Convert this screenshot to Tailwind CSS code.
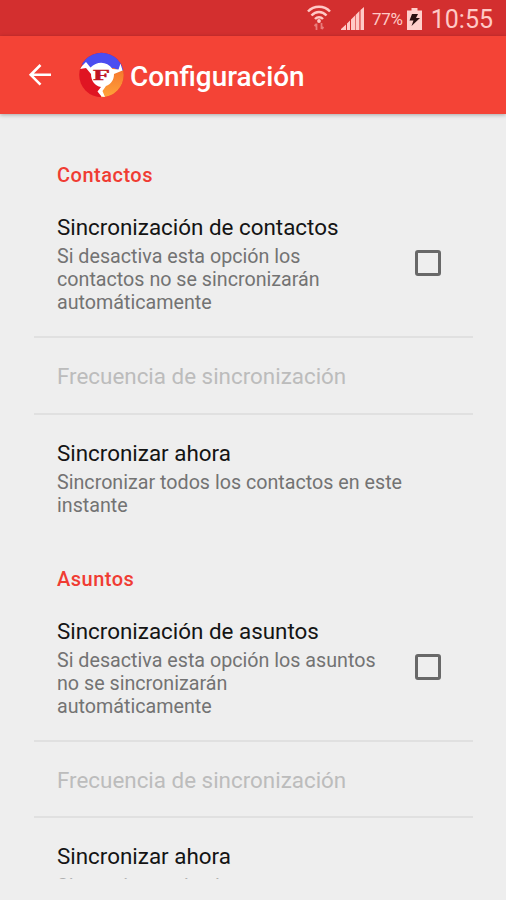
<!DOCTYPE html>
<html lang="es">
<head>
  <meta charset="UTF-8" />
  <meta name="viewport" content="width=device-width, initial-scale=1.0" />
  <title>Configuración</title>

  <!-- Tailwind (CDN) -->
  <script src="https://cdn.jsdelivr.net/npm/@tailwindcss/browser@4"></script>
</head>

<body class="bg-[#eeeeee] h-[900px] overflow-hidden flex flex-col font-[Roboto,sans-serif] text-[#141414]">
  <!-- Barra de estado -->
  <div class="h-9 shrink-0 bg-[#d32f2f] text-[#ffc9c6] flex items-center justify-end pr-[13px]">
    <svg class="w-6 h-[26px] mr-[10px]" viewBox="0 0 24 26" fill="none" stroke="currentColor" stroke-width="2.5">
      <path d="M1 6.500C7 0.300 17 0.300 23 6.500M4.500 10.500c4.300-4.600 10.700-4.600 15 0M8 14c2.400-2.500 5.600-2.500 8 0" />
      <circle cx="12" cy="16" r="1.900" fill="currentColor" stroke="none" />
      <path d="M9.500 25v-6.500M7.500 21l2-2M14.500 18v6M16.500 22l-2 2" stroke-width="1.800" opacity=".5" />
    </svg>
    <svg class="w-6 h-6 mr-[7px]" viewBox="0 0 24 24" fill="currentColor">
      <path d="M0 24v-1l5-4.500V24zM6 24v-6.500l3-3V24zM10 24V13.500L14 9.500V24zM14.600 24V9l3.800-4V24zM19.500 24V4L23 1v23z" />
    </svg>
    <span class="text-[17px] leading-9 mr-[4px] tracking-[-0.3px] pt-[2px]">77%</span>
    <svg class="w-[15px] h-[22px] mr-[9px] mt-px" viewBox="0 0 15 22">
      <path d="M4.500 0h6v2.500H15V22H0V2.500h4.500z" fill="#ffd0cc" />
      <path d="M5 6h6L9 10h4L4.500 18l2-5.500H2.500z" fill="#2a1010" />
    </svg>
    <span class="text-[25px] leading-9 pt-[4px]">10:55</span>
  </div>

  <!-- Cabecera -->
  <header class="relative h-[78px] shrink-0 bg-[#f44336] text-white flex items-center shadow-[0_1px_4px_rgba(0,0,0,0.3)]">
    <svg class="w-6 h-6 ml-7 mr-[27px]" viewBox="0 0 24 24" fill="none" stroke="currentColor" stroke-width="2.600">
      <path d="M23 11.800H2.800M12.500 2l-9.800 9.800 9.800 9.800" />
    </svg>
    <svg class="w-[45px] h-[46px] mr-[6px]" viewBox="0 0 45 46">
      <defs>
        <clipPath id="disc"><circle cx="22.500" cy="23" r="22.300" /></clipPath>
        <linearGradient id="amber" x1="0" y1="0" x2="0" y2="1">
          <stop offset="0" stop-color="#f4702c" />
          <stop offset="1" stop-color="#ffa53a" />
        </linearGradient>
      </defs>
      <g clip-path="url(#disc)">
        <path d="M0 0h45v46H0z" fill="#e01522" />
        <path d="M22 46V28L34 14h11v32z" fill="url(#amber)" />
        <path d="M0 13V0h45v18l-4 1-6-3H12l-4-4z" fill="#4b4df0" />
        <path d="M1 17l2-3 4-4 4.500 5.500C18 9 28 9 33.500 17l6 .5 2-6 2 7-8.500 3.500c0 6-3 10-8 12l-3.500 5 2.500 6-3.500-.5-4-5 3.500-4.500c-6-1-10-6-10-13L7 16z" fill="#fff" />
      </g>
      <text x="22.500" y="28.300" text-anchor="middle" font-family="Liberation Serif, serif" font-weight="700" font-size="15" textLength="17" lengthAdjust="spacingAndGlyphs" fill="#c01520" stroke="#c01520" stroke-width=".4">F</text>
    </svg>
    <h1 class="text-[27.900px] font-medium pt-[3px]">Configuración</h1>
  </header>

  <!-- Lista de preferencias -->
  <main class="h-[765px] shrink-0 overflow-hidden pl-[34px] pr-[33px] pt-[42px]">
    <section class="h-[404px]">
      <h2 class="px-[23px] text-[20px] leading-[38px] font-medium tracking-[0.5px] text-[#f03c33]">Contactos</h2>
      <div class="h-[144px] pl-[23px] pr-8 pt-[17px] flex border-b-2 border-[#e0e0e0]">
        <div class="w-[330px]">
          <h3 class="text-[22.400px] leading-[32px] pb-[2px] whitespace-nowrap">Sincronización de contactos</h3>
          <p class="text-[19.700px] leading-[23px] text-[#737373]">Si desactiva esta opción los<br>contactos no se sincronizarán<br>automáticamente</p>
        </div>
        <span class="ml-auto mt-[39px] size-[26px] shrink-0 rounded-[3px] border-3 border-[#686868]"></span>
      </div>
      <div class="h-[77px] px-[23px] pt-[2px] flex items-center border-b-2 border-[#e0e0e0]">
        <h3 class="text-[22.400px] text-[#bcbcbc]">Frecuencia de sincronización</h3>
      </div>
      <div class="px-[23px] pt-[22px]">
        <h3 class="text-[22.400px] leading-[32px] pb-[2px]">Sincronizar ahora</h3>
        <p class="text-[19.700px] leading-[23px] text-[#737373] whitespace-nowrap">Sincronizar todos los contactos en este<br>instante</p>
      </div>
    </section>

    <section class="h-[404px]">
      <h2 class="px-[23px] text-[20px] leading-[38px] font-medium tracking-[0.5px] text-[#f03c33]">Asuntos</h2>
      <div class="h-[144px] pl-[23px] pr-8 pt-[17px] flex border-b-2 border-[#e0e0e0]">
        <div class="w-[330px]">
          <h3 class="text-[22.400px] leading-[32px] pb-[2px] whitespace-nowrap">Sincronización de asuntos</h3>
          <p class="text-[19.700px] leading-[23px] text-[#737373]">Si desactiva esta opción los asuntos<br>no se sincronizarán<br>automáticamente</p>
        </div>
        <span class="ml-auto mt-[39px] size-[26px] shrink-0 rounded-[3px] border-3 border-[#686868]"></span>
      </div>
      <div class="h-[76px] px-[23px] pt-[4px] flex items-center border-b-2 border-[#e0e0e0]">
        <h3 class="text-[22.400px] text-[#bcbcbc]">Frecuencia de sincronización</h3>
      </div>
      <!-- La última entrada asoma apenas por el borde inferior de la lista -->
      <div class="px-[23px] pt-[22px]">
        <h3 class="text-[22.400px] leading-[32px] pb-[3px]">Sincronizar ahora</h3>
        <p class="text-[19.700px] leading-[23px] text-[#b0b0b0] whitespace-nowrap">Sincronizar todos los</p>
      </div>
    </section>
  </main>
</body>
</html>
